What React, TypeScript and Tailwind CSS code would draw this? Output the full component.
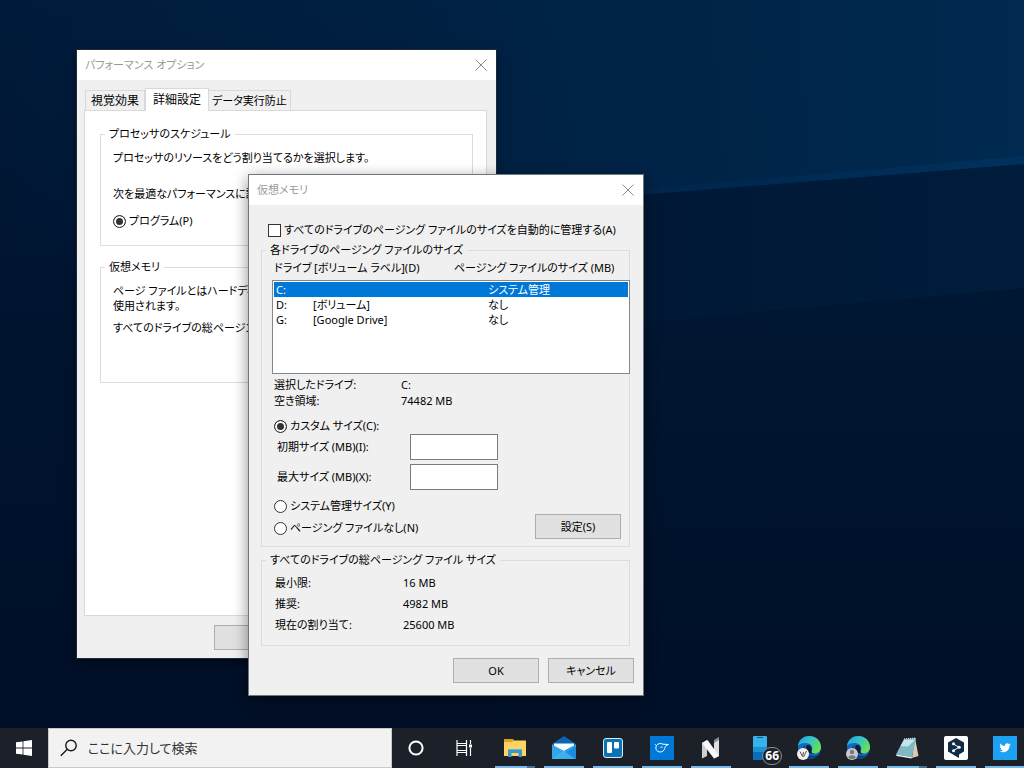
import type { ReactNode } from "react";
import { useState } from "react";

const drives = [
  { letter: "C:", label: "", size: "システム管理" },
  { letter: "D:", label: "[ボリューム]", size: "なし" },
  { letter: "G:", label: "[Google Drive]", size: "なし" },
];

const totals = [
  { name: "最小限:", value: "16 MB" },
  { name: "推奨:", value: "4982 MB" },
  { name: "現在の割り当て:", value: "25600 MB" },
];

function Wallpaper() {
  return (
    <svg
      className="absolute inset-0 h-full w-full"
      viewBox="0 0 1024 728"
      preserveAspectRatio="none"
      aria-hidden="true"
    >
      <defs>
        <linearGradient id="base" x1="0" y1="0" x2="0" y2="1">
          <stop offset="0" stopColor="#001b3a" />
          <stop offset="0.45" stopColor="#001430" />
          <stop offset="1" stopColor="#000f27" />
        </linearGradient>
        <linearGradient id="beam" x1="0" y1="0" x2="1" y2="0">
          <stop offset="0" stopColor="#002549" stopOpacity="0" />
          <stop offset="0.6" stopColor="#002448" stopOpacity="0.9" />
          <stop offset="1" stopColor="#002a50" />
        </linearGradient>
        <linearGradient id="lower" x1="0" y1="0" x2="1" y2="0">
          <stop offset="0" stopColor="#001633" />
          <stop offset="1" stopColor="#001d3b" />
        </linearGradient>
        <linearGradient id="floor" x1="0" y1="0" x2="0" y2="1">
          <stop offset="0" stopColor="#001733" />
          <stop offset="0.6" stopColor="#00122b" />
          <stop offset="1" stopColor="#000f27" />
        </linearGradient>
        <linearGradient id="edge" x1="0" y1="0" x2="1" y2="0">
          <stop offset="0" stopColor="#003060" stopOpacity="0.2" />
          <stop offset="1" stopColor="#003666" stopOpacity="0.6" />
        </linearGradient>
      </defs>
      <rect width="1024" height="728" fill="url(#base)" />
      <path d="M0 0H1024V164L640 195L0 246Z" fill="url(#beam)" />
      <path d="M496 207L1024 164V290L496 335Z" fill="url(#lower)" />
      <path d="M496 335L1024 288V728H496Z" fill="url(#floor)" />
      <path d="M640 190L1024 156V164L640 195Z" fill="url(#edge)" />
    </svg>
  );
}

function TitleBar({ title }: { title: string }) {
  return (
    <div className="flex h-[30px] items-center justify-between bg-white px-2 text-[#999999]">
      <h2>{title}</h2>
      <button type="button" aria-label="閉じる" className="p-px">
        <svg
          className="block"
          width="12"
          height="12"
          viewBox="0 0 12 12"
          stroke="#8a8a8a"
          fill="none"
        >
          <path d="M0.5 0.5L11.5 11.5M11.5 0.5L0.5 11.5" />
        </svg>
      </button>
    </div>
  );
}

function Group({
  title,
  className,
  children,
}: {
  title: string;
  className: string;
  children: ReactNode;
}) {
  return (
    <fieldset className="min-w-0 border border-[#dcdcdc]">
      <legend className="ml-1 px-1">{title}</legend>
      <div className={className}>{children}</div>
    </fieldset>
  );
}

function Radio({
  name,
  label,
  defaultChecked,
}: {
  name: string;
  label: string;
  defaultChecked?: boolean;
}) {
  return (
    <label className="flex items-center gap-[3px]">
      <input
        type="radio"
        name={name}
        defaultChecked={defaultChecked}
        className="size-[13px] shrink-0 appearance-none rounded-full border border-[#333333] bg-white checked:bg-[#333333] checked:shadow-[inset_0_0_0_2px_#ffffff]"
      />
      {label}
    </label>
  );
}

function PushButton({ children, label }: { children?: ReactNode; label?: string }) {
  return (
    <button
      type="button"
      aria-label={label}
      className="h-[25px] w-[86px] shrink-0 border border-[#adadad] bg-[#e1e1e1]"
    >
      {children}
    </button>
  );
}

function PerformanceOptions() {
  return (
    <section className="absolute left-[77px] top-[50px] w-[419px] bg-[#f0f0f0] shadow-[0_0_0_1px_#1c2a3c,0_4px_10px_rgba(0,0,0,0.5)]">
      <TitleBar title="パフォーマンス オプション" />
      <div className="pb-2 pl-[7px] pr-[9px] pt-2">
        <div role="tablist" className="flex items-end pl-px">
          <button
            type="button"
            role="tab"
            className="h-5 border border-b-0 border-[#d9d9d9] px-[5px] text-xs"
          >
            視覚効果
          </button>
          <button
            type="button"
            role="tab"
            aria-selected="true"
            className="relative -mb-px h-[23px] border border-b-0 border-[#d9d9d9] bg-white px-[7px] text-xs"
          >
            詳細設定
          </button>
          <button
            type="button"
            role="tab"
            className="h-5 border border-b-0 border-l-0 border-[#d9d9d9] px-[3px]"
          >
            データ実行防止
          </button>
        </div>
        <div
          role="tabpanel"
          className="min-h-[506px] whitespace-nowrap border border-[#d9d9d9] bg-white pl-[15px] pr-[13px] pt-[15px]"
        >
          <Group title="プロセッサのスケジュール" className="overflow-hidden pb-4 pl-3 pt-2">
            <p>プロセッサのリソースをどう割り当てるかを選択します。</p>
            <p className="mt-5">次を最適なパフォーマンスに調</p>
            <div className="mt-[11px]">
              <Radio name="schedule" label="プログラム(P)" defaultChecked />
            </div>
          </Group>
          <div className="mt-[13px]">
            <Group title="仮想メモリ" className="overflow-hidden pb-[46px] pl-3 pt-2">
              <p className="leading-[15px]">
                ページ ファイルとはハードディス
                <br />
                使用されます。
              </p>
              <p className="mt-[7px]">すべてのドライブの総ページン</p>
            </Group>
          </div>
        </div>
        <div className="mt-[9px] flex pl-[130px]">
          <PushButton label="OK" />
        </div>
      </div>
    </section>
  );
}

function VirtualMemory() {
  const [selected, setSelected] = useState("C:");

  return (
    <section className="absolute left-[248px] top-[174px] w-[396px] whitespace-nowrap border border-[#6f7780] bg-[#f0f0f0] shadow-[0_4px_14px_rgba(0,0,0,0.45)]">
      <TitleBar title="仮想メモリ" />
      <div className="pb-3 pl-3 pr-[13px] pt-[17px]">
        <label className="mb-1 flex items-center gap-[3px] pl-[7px]">
          <input
            type="checkbox"
            className="size-[13px] shrink-0 appearance-none border border-[#333333] bg-white checked:bg-[#333333]"
          />
          すべてのドライブのページング ファイルのサイズを自動的に管理する(A)
        </label>

        <Group title="各ドライブのページング ファイルのサイズ" className="pb-[7px] pl-2.5 pr-2 pt-0.5">
          <div id="drive-head" className="flex pl-0.5">
            <span className="w-10 shrink-0">ドライブ</span>
            <span className="w-[140px] shrink-0">[ボリューム ラベル](D)</span>
            <span>ページング ファイルのサイズ (MB)</span>
          </div>
          <div className="-mr-[9px] mt-1 h-[94px] border border-[#828790] bg-white p-px">
            <table aria-labelledby="drive-head" className="w-full table-fixed">
              <tbody>
                {drives.map((d) => (
                  <tr
                    key={d.letter}
                    onClick={() => setSelected(d.letter)}
                    className={
                      d.letter === selected ? "bg-[#0078d7] leading-[15px] text-white" : "leading-[15px]"
                    }
                  >
                    <td className="w-[39px] pl-0.5">{d.letter}</td>
                    <td className="w-[175px]">{d.label}</td>
                    <td>{d.size}</td>
                  </tr>
                ))}
              </tbody>
            </table>
          </div>

          <dl className="mt-[3px] grid grid-cols-[127px_1fr] pl-0.5">
            <dt>選択したドライブ:</dt>
            <dd>{selected}</dd>
            <dt>空き領域:</dt>
            <dd>74482 MB</dd>
          </dl>

          <div className="mt-[9px] pl-0.5">
            <Radio name="paging" label="カスタム サイズ(C):" defaultChecked />
          </div>
          <div className="grid grid-cols-[133px_88px] items-center gap-y-1 pl-[5px]">
            <label htmlFor="initial-size">初期サイズ (MB)(I):</label>
            <input
              id="initial-size"
              type="text"
              className="h-[26px] border border-[#7a7a7a] bg-white px-1"
            />
            <label htmlFor="max-size">最大サイズ (MB)(X):</label>
            <input
              id="max-size"
              type="text"
              className="h-[26px] border border-[#7a7a7a] bg-white px-1"
            />
          </div>
          <div className="mt-2 flex items-end justify-between">
            <div className="flex flex-col gap-1.5 pb-[3px] pl-0.5">
              <Radio name="paging" label="システム管理サイズ(Y)" />
              <Radio name="paging" label="ページング ファイルなし(N)" />
            </div>
            <PushButton>設定(S)</PushButton>
          </div>
        </Group>

        <div className="mt-[5px]">
          <Group
            title="すべてのドライブの総ページング ファイル サイズ"
            className="pb-2.5 pl-[13px] pt-1"
          >
            <dl className="grid grid-cols-[128px_1fr] leading-[21px]">
              {totals.map((t) => (
                <div key={t.name} className="contents">
                  <dt>{t.name}</dt>
                  <dd>{t.value}</dd>
                </div>
              ))}
            </dl>
          </Group>
        </div>

        <div className="-mr-1 mt-3 flex justify-end gap-[9px]">
          <PushButton>OK</PushButton>
          <PushButton>キャンセル</PushButton>
        </div>
      </div>
    </section>
  );
}

function WindowsLogo() {
  return (
    <svg width="16" height="16" viewBox="0 0 16 16" fill="#ffffff">
      <path d="M0 2.3L6.6 1.4V7.5H0ZM7.4 1.2L16 0V7.5H7.4ZM0 8.4H6.6V14.6L0 13.7ZM7.4 8.4H16V16L7.4 14.8Z" />
    </svg>
  );
}

function CortanaIcon() {
  return (
    <svg width="16" height="16" viewBox="0 0 16 16" fill="none">
      <circle cx="8" cy="8" r="6.6" stroke="#ffffff" strokeWidth="2" />
    </svg>
  );
}

function TaskViewIcon() {
  return (
    <svg width="18" height="16" viewBox="0 0 18 16" fill="none" stroke="#ffffff" strokeWidth="1.2">
      <path d="M2 0V3.5H11.5V0M2 16V12.5H11.5V16M2 5.5H11.5V10.5H2ZM2 3V13M11.5 3V13M15.5 0V4M15.5 8V16" />
      <path d="M14 4.5H17V7.5H14Z" fill="#ffffff" stroke="none" />
    </svg>
  );
}

function ExplorerIcon() {
  return (
    <svg width="22" height="20" viewBox="0 0 22 20">
      <path d="M0 1H9L10.5 3H21V18H0Z" fill="#e0a21b" />
      <path d="M0 4H8L10 2.5H22V18H0Z" fill="#fcd462" />
      <path d="M4 11H18V19H14.5V15H7.5V19H4Z" fill="#3f95cf" />
      <path d="M4 11H18V12H4Z" fill="#62b2e4" />
    </svg>
  );
}

function MailIcon() {
  return (
    <svg width="24" height="24" viewBox="0 0 24 24">
      <path d="M0 8L12 0L24 8V12H0Z" fill="#0a63b4" />
      <path d="M2 7.5H22V12L12 18L2 12Z" fill="#f6fbff" />
      <path d="M0 8.5L12 15L24 8.5V23H0Z" fill="#34a5ea" />
      <path d="M12 15L24 8.5V23H22Z" fill="#1d8bdc" />
      <path d="M0 23L24 8.5V10L12 17Z" fill="#54c8fa" opacity="0.5" />
      <path d="M12 15L0 23H24Z" fill="#45b8f2" opacity="0.5" />
    </svg>
  );
}

function TrelloIcon() {
  return (
    <svg width="20" height="20" viewBox="0 0 20 20">
      <rect x="0.5" y="0.5" width="19" height="19" rx="2.5" fill="#0a72b5" stroke="#d9edf8" />
      <rect x="4" y="4" width="5" height="11" rx="1" fill="#ffffff" />
      <rect x="11" y="4" width="5" height="6.5" rx="1" fill="#ffffff" />
    </svg>
  );
}

function BirdIcon() {
  return (
    <svg width="24" height="24" viewBox="0 0 24 24" fill="none" stroke="#ffffff">
      <rect width="24" height="24" fill="#0078d7" stroke="none" />
      <path d="M13 8.2C10.500 6.900 7.800 7.600 6.600 9.400C5.200 11.500 5.800 14.200 7.800 15.400C10.200 16.700 13.200 15.800 14.300 13.600C15.200 11.900 14.800 10.500 16 9.600L18.500 8.500L13 8.200" />
      <path d="M10.500 11.200H12.500M6.200 9.500L5.200 8.200" />
    </svg>
  );
}

function FoldedStripIcon() {
  return (
    <svg width="20" height="24" viewBox="0 0 20 24">
      <path d="M1 7L6 4V20L1 22.500Z" fill="#cfcfcf" />
      <path d="M13 6L18 3.500V20L13 22.500Z" fill="#dedede" />
      <path d="M1 7L6.500 4L18 20L13 22.500Z" fill="#f8f8f8" />
      <path d="M13 4L18 1V4L13 7Z" fill="#8d8d93" />
    </svg>
  );
}

function PhoneIcon() {
  return (
    <svg width="14" height="24" viewBox="0 0 14 24">
      <rect width="14" height="24" rx="1" fill="#37b3ea" />
      <path d="M0 11H14V17H0Z" fill="#1b93d6" />
      <path d="M0 16H14V23A1 1 0 0 1 13 24H1A1 1 0 0 1 0 23Z" fill="#0b6cba" />
      <path d="M4 1.500H10" stroke="#0d4f8a" />
    </svg>
  );
}

function EdgeIcon({ badge }: { badge: ReactNode }) {
  return (
    <svg width="26" height="26" viewBox="0 0 26 26">
      <defs>
        <linearGradient id="edge-top" x1="0" y1="0" x2="1" y2="0.6">
          <stop offset="0" stopColor="#1e9fe0" />
          <stop offset="0.5" stopColor="#36c4c6" />
          <stop offset="1" stopColor="#6be052" />
        </linearGradient>
      </defs>
      <circle cx="13.500" cy="12.500" r="11.500" fill="#0f6cc0" />
      <path
        d="M2 11C3 4 8 1 13.500 1C20 1 25 6 25 12C25 16 22 18.500 18.500 18.500C16 18.500 15 17.500 15.500 16.200C17.500 13.500 16 8.500 10.500 8C6.500 7.600 3.500 9 2 11Z"
        fill="url(#edge-top)"
      />
      <path
        d="M9.500 10C8 13.500 10 19.500 16 20.500C19.500 21 22 20 23.500 18.800C21 22.500 17.500 24 13.500 24C9 23 6.500 19 6.500 15.500C6.500 12.500 8 10.800 9.500 10Z"
        fill="#123f84"
      />
      <path
        d="M10.500 10.500C13.500 9 16.500 12 15.500 16C15 17.700 16.500 18.500 18.500 18.500C13 20 9 15 10.500 10.500Z"
        fill="#101c2c"
      />
      {badge}
    </svg>
  );
}

function NotepadIcon() {
  return (
    <svg width="24" height="22" viewBox="0 0 24 22">
      <path d="M20 1L23.500 19L17 21Z" fill="#d9cbb0" />
      <path d="M9 2L21 1L17 20L1 17.500Z" fill="#7fb9c8" />
      <path d="M9 3L20.500 2.500L13 9.500L5.500 9Z" fill="#c5e4ea" />
      <path d="M1 17.500L17 20L16.500 21.500L1.500 19Z" fill="#eef3f3" />
      <path d="M9 2L21 1" stroke="#f5f5f5" strokeDasharray="1 1" />
    </svg>
  );
}

function HexShareIcon() {
  return (
    <svg width="24" height="24" viewBox="0 0 24 24">
      <rect width="24" height="24" rx="2" fill="#ffffff" />
      <path d="M12 2L20 6.500V15.500L15 18.500V22L11.500 20L4 15.500V6.500Z" fill="#0f2b46" />
      <path d="M9.500 8L15 11.300L9.500 14.500" stroke="#ffffff" fill="none" />
      <g fill="#ffffff">
        <circle cx="9.500" cy="7.800" r="1.500" />
        <circle cx="15.200" cy="11.300" r="1.500" />
        <circle cx="9.500" cy="14.700" r="1.500" />
      </g>
    </svg>
  );
}

function TwitterIcon() {
  return (
    <svg width="24" height="24" viewBox="0 0 24 24">
      <rect width="24" height="24" fill="#1da1f2" />
      <path
        d="M17.700 8.200C17.300 8.400 16.800 8.500 16.400 8.600C16.900 8.300 17.200 7.900 17.400 7.300C17 7.600 16.500 7.800 15.900 7.900C14.300 6.200 11.600 7.500 12 9.900C10.100 9.800 8.300 8.900 7.200 7.400C6.500 8.500 6.900 9.900 7.900 10.600C7.500 10.600 7.200 10.500 6.800 10.300C6.800 11.500 7.600 12.400 8.700 12.700C8.400 12.800 8 12.800 7.700 12.700C8 13.700 8.800 14.300 9.900 14.400C8.900 15.100 7.700 15.500 6.400 15.300C10.800 18 16.600 15.200 16.600 9.500C17.100 9.200 17.500 8.700 17.700 8.200Z"
        fill="#ffffff"
      />
    </svg>
  );
}

const penBadge = (
  <g>
    <circle cx="7" cy="19" r="6" fill="#f3f0ee" />
    <path d="M4 16.500L6.500 21.500L7.500 17M7.500 22L10.500 16" stroke="#5c5350" fill="none" />
  </g>
);

const personBadge = (
  <g>
    <circle cx="7" cy="19" r="6" fill="#c9c9c9" />
    <circle cx="7" cy="17" r="2.200" fill="#77797c" />
    <path d="M3.200 22.500C3.500 19.500 10.500 19.500 10.800 22.500C9 24.500 5 24.500 3.200 22.500Z" fill="#77797c" />
  </g>
);

const apps = [
  { name: "エクスプローラー", icon: <ExplorerIcon />, state: "stacked" },
  { name: "メール", icon: <MailIcon />, state: "open" },
  { name: "Trello", icon: <TrelloIcon />, state: "open" },
  { name: "鳥", icon: <BirdIcon />, state: "open" },
  { name: "ノート", icon: <FoldedStripIcon />, state: "open" },
  { name: "スマホ同期", icon: <PhoneIcon />, state: "idle", count: 66 },
  { name: "Edge", icon: <EdgeIcon badge={penBadge} />, state: "open" },
  { name: "Edge 個人", icon: <EdgeIcon badge={personBadge} />, state: "open" },
  { name: "メモ帳", icon: <NotepadIcon />, state: "stacked" },
  { name: "DeepL", icon: <HexShareIcon />, state: "open" },
  { name: "Twitter", icon: <TwitterIcon />, state: "open" },
];

function Taskbar() {
  return (
    <footer className="flex h-10 overflow-hidden bg-[#1b2029]">
      <button type="button" aria-label="スタート" className="flex w-12 shrink-0 items-center justify-center">
        <WindowsLogo />
      </button>
      <label className="flex w-[344px] shrink-0 items-center gap-2.5 border border-[#c8c8c8] bg-[#f2f2f2] pl-[11px]">
        <svg width="18" height="18" viewBox="0 0 18 18" fill="none" stroke="#1a1a1a" strokeWidth="1.4">
          <circle cx="11" cy="6.500" r="5.200" />
          <path d="M7.300 10.300L0.800 16.800" />
        </svg>
        <input
          type="text"
          aria-label="検索"
          placeholder="ここに入力して検索"
          className="min-w-0 flex-1 bg-transparent text-[13px] text-[#333333] outline-none placeholder:text-[#333333]"
        />
      </label>
      <button type="button" aria-label="Cortana" className="flex w-12 shrink-0 items-center justify-center">
        <CortanaIcon />
      </button>
      <button type="button" aria-label="タスク ビュー" className="flex w-12 shrink-0 items-center justify-center">
        <TaskViewIcon />
      </button>
      <nav className="flex pl-0.5">
        {apps.map((app) => (
          <button
            key={app.name}
            type="button"
            aria-label={app.name}
            className="relative flex w-[49px] shrink-0 flex-col items-center pt-0.5"
          >
            <span className="flex flex-1 items-center">{app.icon}</span>
            {app.count && (
              <span className="absolute bottom-[3px] right-0.5 rounded-full border border-[#8a8d92] bg-[#1b2029] px-0.5 text-xs font-bold leading-4 text-white">
                {app.count}
              </span>
            )}
            {app.state === "open" && <span className="h-0.5 w-10 bg-[#76b9ed]" />}
            {app.state === "stacked" && (
              <span className="h-0.5 w-10 border-r-8 border-[#4a6f92] bg-[#76b9ed]" />
            )}
            {app.state === "idle" && <span className="h-0.5 w-10" />}
          </button>
        ))}
      </nav>
    </footer>
  );
}

export default function App() {
  return (
    <div className="flex min-h-screen flex-col overflow-hidden bg-[#000f27] font-['Noto_Sans','Noto_Sans_CJK_JP',sans-serif] text-[11px] leading-4 text-black [font-feature-settings:'palt']">
      <main className="relative flex-1 overflow-hidden">
        <Wallpaper />
        <PerformanceOptions />
        <VirtualMemory />
      </main>
      <Taskbar />
    </div>
  );
}
